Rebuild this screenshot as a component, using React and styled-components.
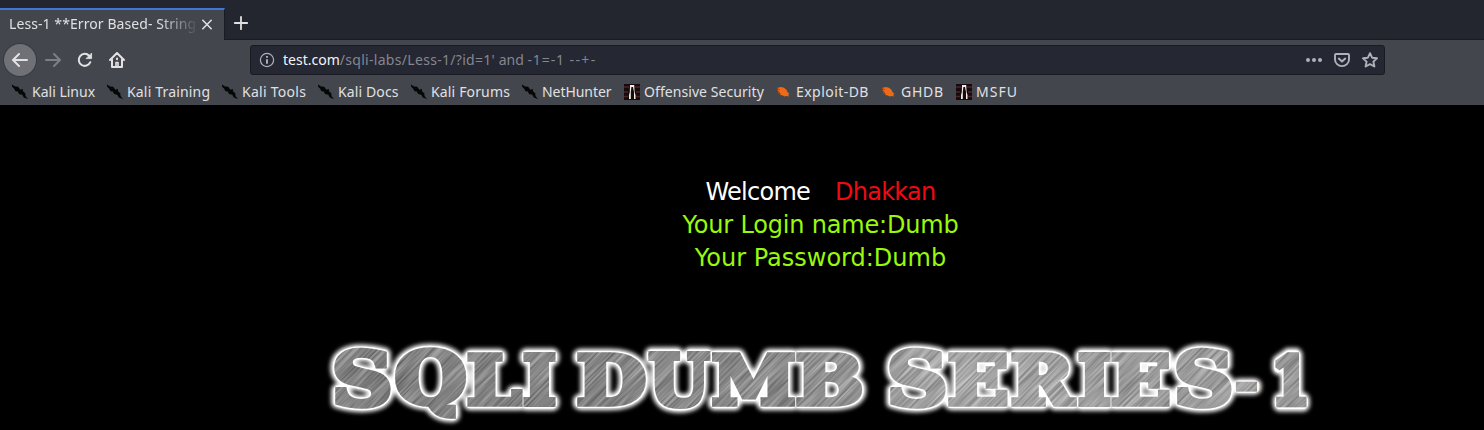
import React, { useLayoutEffect, useState } from 'react';
import styled, { createGlobalStyle } from 'styled-components';

const GlobalStyle = createGlobalStyle`
  body { margin: 0; background: #000; overflow: hidden; }
  * { box-sizing: border-box; }
  svg { display: block; flex: none; }
`;

const Browser = styled.div`
  width: 1484px;
  height: 430px;
  display: flex;
  flex-direction: column;
  background: #000;
  font: 14px/20px "Noto Sans", sans-serif;
  color: #e0e0e2;
  overflow: hidden;
`;

const TabBar = styled.div`
  height: 40px;
  padding-top: 8px;
  display: flex;
  background: #23252f;
  border-bottom: 1px solid #191b23;
`;

const Tab = styled.div`
  width: 225px;
  height: 32px;
  flex: none;
  display: flex;
  align-items: center;
  padding: 0 11px 0 9px;
  background: #43464d;
  border-top: 2px solid #3f77d6;
  border-right: 1px solid #1a1c24;
`;

const TabTitle = styled.div`
  width: 187px;
  margin: -2px 5px 0 0;
  overflow: hidden;
  white-space: nowrap;
  letter-spacing: 0.08px;
  mask-image: linear-gradient(to right, #000 150px, transparent 190px);
`;

const NewTab = styled.div`
  padding: 7px 0 0 8px;
`;

const NavBar = styled.div`
  height: 40px;
  flex: none;
  display: flex;
  align-items: center;
  padding-left: 4px;
  background: #43464d;
`;

const NavButton = styled.div`
  width: 32px;
  height: 32px;
  flex: none;
  display: flex;
  align-items: center;
  justify-content: center;
  border-radius: 50%;
  color: ${(p) => (p.$dim ? '#7d7f84' : '#e2e2e4')};
  background: ${(p) => (p.$round ? '#6f7176' : 'transparent')};
  box-shadow: ${(p) => (p.$round ? '0 0 0 1px #393b41' : 'none')};
  margin-right: ${(p) => (p.$round ? 1 : 0)}px;
`;

const UrlBar = styled.div`
  width: 1135px;
  height: 30px;
  margin-left: 117px;
  padding: 0 6px 0 8px;
  display: flex;
  align-items: center;
  background: #252733;
  border: 1px solid #191a22;
  border-radius: 3px;
  color: #b0b1b8;
`;

const Address = styled.div`
  flex: 1;
  padding-left: 8px;
  white-space: pre;
  color: #85868e;
`;

const AddressPart = styled.span`
  color: ${(p) => (p.$host ? '#f4f4f6' : 'inherit')};
  letter-spacing: ${(p) => p.$spacing || 0}px;
`;

const UrlActions = styled.div`
  display: flex;
  align-items: center;
  gap: 12px;
`;

const Bookmarks = styled.div`
  height: 25px;
  flex: none;
  display: flex;
  align-items: center;
  padding: 0 0 1px 12px;
  background: #43464d;
`;

const Bookmark = styled.div`
  width: ${(p) => p.$width}px;
  flex: none;
  display: flex;
  align-items: center;
  gap: 4px;
  white-space: nowrap;
  letter-spacing: ${(p) => p.$spacing}px;
`;

const BookmarkLabel = styled.span`
  margin-top: -1px;
`;

const Page = styled.main`
  flex: 1;
  display: flex;
  flex-direction: column;
  padding-top: 71px;
  background: #000;
`;

const Messages = styled.div`
  width: 1641px;
  text-align: center;
  font: 24px/33px "DejaVu Sans", sans-serif;
  color: #98f90c;
`;

const Message = styled.div`
  height: 33px;
  white-space: pre;
  letter-spacing: ${(p) => p.$spacing || 0}px;
`;

const Welcome = styled.span`
  color: #fff;
  margin-right: 25px;
`;

const UserName = styled.span`
  color: #f00a12;
`;

const Banner = styled.svg`
  margin-top: 55px;
  overflow: hidden;
`;

const stroke = { fill: 'none', stroke: 'currentColor', strokeWidth: 2, strokeLinecap: 'round', strokeLinejoin: 'round' };

const BackIcon = () => (
  <svg width="16" height="16" viewBox="0 0 16 16" {...stroke}><path d="M15 8H1.5M7 2L1 8l6 6" /></svg>
);
const ForwardIcon = () => (
  <svg width="16" height="16" viewBox="0 0 16 16" {...stroke}><path d="M1 8h13.5M9 2l6 6-6 6" /></svg>
);
const ReloadIcon = () => (
  <svg width="16" height="16" viewBox="0 0 16 16" {...stroke}>
    <path d="M13.3 10.2A6 6 0 1 1 12.2 3.8" />
    <path d="M14.6 1.4v5.2H9.4z" fill="currentColor" strokeWidth="0.8" />
  </svg>
);
const HomeIcon = () => (
  <svg width="16" height="16" viewBox="0 0 16 16" {...stroke}>
    <path d="M1 8l7-7 7 7M3 7.5V15h10V7.5" />
    <path d="M7 15v-4.5h2V15" strokeWidth="1.6" />
    <path d="M8 6.6v.6" />
  </svg>
);
const InfoIcon = () => (
  <svg width="16" height="16" viewBox="0 0 16 16" fill="none" stroke="currentColor">
    <circle cx="8" cy="8" r="6.6" strokeWidth="1.2" />
    <path d="M8 7.2v4.6M8 4v1.8" strokeWidth="1.9" />
  </svg>
);
const DotsIcon = () => (
  <svg width="16" height="16" viewBox="0 0 16 16" fill="currentColor">
    <circle cx="2" cy="8" r="2" /><circle cx="8" cy="8" r="2" /><circle cx="14" cy="8" r="2" />
  </svg>
);
const PocketIcon = () => (
  <svg width="16" height="16" viewBox="0 0 16 16" {...stroke}>
    <path d="M2 2h12q1 0 1 1v4.5a7 6.6 0 0 1-14 0V3q0-1 1-1z" strokeWidth="1.9" />
    <path d="M4.8 6.6L8 9.6l3.2-3" />
  </svg>
);
const StarIcon = () => (
  <svg width="16" height="16" viewBox="0 0 16 16" {...stroke}>
    <path d="M8 1.2l2.1 4.5 4.9.6-3.6 3.3 1 4.9L8 12.1l-4.4 2.4 1-4.9L1 6.3l4.9-.6z" strokeWidth="1.9" />
  </svg>
);
const CloseIcon = () => (
  <svg width="12" height="12" viewBox="0 0 12 12" {...stroke} strokeWidth="1.6"><path d="M1.8 1.3l8.4 8.4M10.2 1.3l-8.4 8.4" /></svg>
);
const PlusIcon = () => (
  <svg width="16" height="16" viewBox="0 0 16 16" {...stroke} strokeWidth="1.8"><path d="M8 1.8v12.4M1.8 8h12.4" /></svg>
);
const KaliIcon = () => (
  <svg width="16" height="16" viewBox="0 0 16 16">
    <path d="M0 .6l3 1.8 3.2.4 2.1 3 2.7-.9-.1 2.4 2.4 2 .2 2.8 2.7 3.1-4.4-1.8-1.5-2.7-3.3-.8-1.2-2.5-2.3-.2L2 4.4 0 2.6z" fill="#050606" />
  </svg>
);
const OffsecIcon = () => (
  <svg width="16" height="16" viewBox="0 0 16 16">
    <path d="M0 0h16v16H0z" fill="#160a0c" />
    <path d="M0 3h5M11 3h5M0 8h4M12 8h4M0 12.5h4M12 12.5h4" stroke="#4b2426" strokeWidth="1.6" />
    <path d="M6 1h4.2l.4 7 .9 3v4H10V8L9 3H7.4l-.6 5v7H5v-4l.8-3z" fill="#f2eceb" />
  </svg>
);
const BugIcon = () => (
  <svg width="16" height="16" viewBox="0 0 16 16">
    <path d="M.8 4l2-.4L5 3l3 .8 2.6 2.2.8 2 2.2 2-1.5.5 1 2.1-2.8-.6-1.6.6-1.8-1-2.6-.6.3-1.5L2 9l1-1.4-1.8-1.3 1-.8z" fill="#ef6a14" />
    <path d="M.8 4L4 6M2 9l2-.5" stroke="#a44416" />
  </svg>
);

const icons = { kali: KaliIcon, offsec: OffsecIcon, bug: BugIcon };

const bookmarks = [
  ['Kali Linux', 95, 'kali', 0],
  ['Kali Training', 115, 'kali', 0.17],
  ['Kali Tools', 96, 'kali', 0.28],
  ['Kali Docs', 93, 'kali', 0.12],
  ['Kali Forums', 111, 'kali', 0.15],
  ['NetHunter', 102, 'kali', -0.05],
  ['Offensive Security', 152, 'offsec', 0.07],
  ['Exploit-DB', 105, 'bug', 0.45],
  ['GHDB', 75, 'bug', 0.7],
  ['MSFU', 70, 'offsec', 1],
];

// Each letter with its left edge, right edge, top and bottom inside the banner.
const letters = [
  ['S', 334, 391, 18, 79], ['Q', 395, 466, 18, 89], ['L', 467, 523, 22, 77], ['I', 523, 556, 22, 77],
  ['D', 577, 646, 22, 77], ['U', 648, 711, 22, 79], ['M', 712, 795, 22, 77], ['B', 796, 862, 22, 77],
  ['S', 889, 946, 18, 79], ['E', 948, 1008, 22, 77], ['R', 1011, 1077, 22, 77], ['I', 1078, 1111, 22, 77],
  ['E', 1111, 1170, 22, 77], ['S', 1176, 1232, 18, 79], ['-', 1236, 1257, 51, 62], ['1', 1275, 1307, 22, 77],
];

const LETTER_FONT = 'bold 100px "DejaVu Serif"';
const EMBOLDEN = 3;

function fitLetters() {
  const ctx = document.createElement('canvas').getContext('2d');
  ctx.font = LETTER_FONT;
  return letters.map(([char, left, right, top, bottom]) => {
    const m = ctx.measureText(char);
    const sx = (right - left - 2 * EMBOLDEN) / (m.actualBoundingBoxRight + m.actualBoundingBoxLeft);
    const sy = (bottom - top - 2 * EMBOLDEN) / (m.actualBoundingBoxAscent + m.actualBoundingBoxDescent);
    const x = left + EMBOLDEN + m.actualBoundingBoxLeft * sx;
    const y = top + EMBOLDEN + m.actualBoundingBoxAscent * sy;
    return { char, transform: `translate(${x} ${y}) scale(${sx} ${sy})` };
  });
}

const Letter = styled.text`
  font: bold 100px "DejaVu Serif", serif;
  stroke-linejoin: ${(p) => (p.$round ? 'round' : 'miter')};
  stroke-miterlimit: 2;
  vector-effect: non-scaling-stroke;
`;

function Title() {
  const [glyphs, setGlyphs] = useState([]);
  useLayoutEffect(() => setGlyphs(fitLetters()), []);
  const draw = (props) => glyphs.map((g, i) => (
    <Letter key={i} transform={g.transform} {...props}>{g.char}</Letter>
  ));
  return (
    <Banner width="1484" height="100" viewBox="0 0 1484 100">
      <defs>
        <linearGradient id="steel" gradientUnits="userSpaceOnUse" x1="330" y1="0" x2="1310" y2="0">
          <stop offset="0" stopColor="#808080" />
          <stop offset=".2" stopColor="#7e7e7e" />
          <stop offset=".45" stopColor="#888" />
          <stop offset=".65" stopColor="#b0b0b0" />
          <stop offset=".8" stopColor="#a4a4a4" />
          <stop offset="1" stopColor="#9c9c9c" />
        </linearGradient>
        <filter id="soft" x="-5%" y="-30%" width="110%" height="160%"><feGaussianBlur stdDeviation="1.9" /></filter>
        <filter id="brushed" x="0" y="0" width="100%" height="100%" colorInterpolationFilters="sRGB">
          <feTurbulence type="fractalNoise" baseFrequency="0.015 0.5" numOctaves="3" seed="4" />
          <feColorMatrix values="1.5 0 0 0 -.2  1.5 0 0 0 -.2  1.5 0 0 0 -.2  0 0 0 0 1" />
        </filter>
        <mask id="face" maskUnits="userSpaceOnUse" x="320" y="0" width="1000" height="100">
          {draw({ fill: '#fff', stroke: '#fff', strokeWidth: EMBOLDEN * 2 })}
        </mask>
      </defs>
      <g filter="url(#soft)">{draw({ $round: true, fill: '#fff', stroke: '#fff', strokeWidth: 13.5 })}</g>
      {draw({ $round: true, fill: '#fff', stroke: '#fff', strokeWidth: 9 })}
      <g mask="url(#face)" aria-hidden="true">
        <rect x="320" width="1000" height="100" fill="url(#steel)" />
        <g opacity=".3">
          <rect x="-100" y="-100" width="1300" height="1300" transform="rotate(-45)" filter="url(#brushed)" />
        </g>
      </g>
    </Banner>
  );
}

export default function App() {
  return (
    <Browser>
      <GlobalStyle />
      <TabBar>
        <Tab>
          <TabTitle>Less-1 **Error Based- String**</TabTitle>
          <CloseIcon />
        </Tab>
        <NewTab><PlusIcon /></NewTab>
      </TabBar>
      <NavBar>
        <NavButton $round><BackIcon /></NavButton>
        <NavButton $dim><ForwardIcon /></NavButton>
        <NavButton><ReloadIcon /></NavButton>
        <NavButton><HomeIcon /></NavButton>
        <UrlBar>
          <InfoIcon />
          <Address>
            <AddressPart $host>test.com</AddressPart>
            <AddressPart $spacing={0.3}>/sqli-labs/Less-1/?id=1'</AddressPart>
            <AddressPart> and </AddressPart>
            <AddressPart $spacing={0.9}>-1=-1 </AddressPart>
            <AddressPart $spacing={1.4}>--+-</AddressPart>
          </Address>
          <UrlActions><DotsIcon /><PocketIcon /><StarIcon /></UrlActions>
        </UrlBar>
      </NavBar>
      <Bookmarks>
        {bookmarks.map(([label, width, icon, spacing]) => {
          const Icon = icons[icon];
          return (
            <Bookmark key={label} $width={width} $spacing={spacing}>
              <Icon />
              <BookmarkLabel>{label}</BookmarkLabel>
            </Bookmark>
          );
        })}
      </Bookmarks>
      <Page>
        <Messages>
          <Message $spacing={-0.75}><Welcome>Welcome</Welcome><UserName>Dhakkan</UserName></Message>
          <Message $spacing={-0.18}>Your Login name:Dumb</Message>
          <Message>Your Password:Dumb</Message>
        </Messages>
        <Title />
      </Page>
    </Browser>
  );
}
